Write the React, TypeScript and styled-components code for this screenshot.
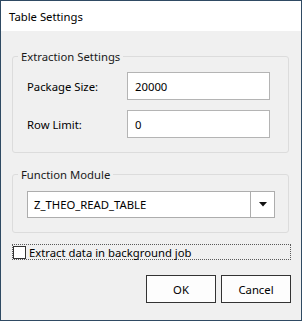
import styled, { createGlobalStyle } from 'styled-components'

const Global = createGlobalStyle`
  html, body { margin: 0; padding: 0; background: #fff; }
  * { box-sizing: border-box; }
  body { font-family: "Noto Sans", "Open Sans", sans-serif; font-size: 11.3px; color: #000; }
`

const Window = styled.div`
  width: 302px;
  height: 321px;
  border: 1px solid #2f4a63;
  background: #f0f0f0;
  display: flex;
  flex-direction: column;
`

const TitleBar = styled.div`
  height: 30px;
  background: #fff;
  display: flex;
  align-items: center;
  padding-left: 8px;
  color: #000;
`

const Body = styled.div`
  flex: 1;
  padding: 17px 12px 0 11px;
  display: flex;
  flex-direction: column;
`

const Group = styled.fieldset<{ $gap?: number }>`
  margin: 0 0 ${(p) => p.$gap ?? 0}px 0;
  padding: 7px 13px 14px 14px;
  min-width: 0;
  border: 1px solid #dcdcdc;
  border-radius: 3px;
  display: flex;
  flex-direction: column;
  gap: 10px;
`

const Legend = styled.legend`
  padding: 0 3px;
  margin-left: -9px;
  line-height: 17px;
  color: #1a1a1a;
`

const FieldRow = styled.div`
  display: flex;
  align-items: center;
  height: 28px;
`

const Label = styled.span`
  width: 100px;
`

const TextInput = styled.div`
  width: 143px;
  height: 28px;
  border: 1px solid #b4b4b4;
  background: #fff;
  display: flex;
  align-items: center;
  padding-left: 7px;
`

const Combo = styled.div`
  width: 248px;
  height: 27px;
  margin-top: 1px;
  border: 1px solid #adadad;
  background: #fff;
  display: flex;
  align-items: stretch;
`

const ComboText = styled.div`
  flex: 1;
  display: flex;
  align-items: center;
  padding-left: 6px;
`

const ComboButton = styled.div`
  width: 24px;
  border-left: 1px solid #adadad;
  display: flex;
  align-items: center;
  justify-content: center;
`

const CheckRow = styled.label`
  margin-top: 11px;
  margin-right: -2px;
  height: 16px;
  border: 1px dotted #5a5a5a;
  display: flex;
  align-items: center;
  gap: 3px;
`

const CheckBox = styled.span`
  width: 13px;
  height: 13px;
  border: 1px solid #333;
  background: #fff;
`

const ButtonBar = styled.div`
  margin-top: 15px;
  margin-right: -2px;
  display: flex;
  justify-content: flex-end;
  gap: 5px;
`

const Button = styled.div`
  width: 70px;
  height: 28px;
  border: 1px solid #333;
  background: #fdfdfd;
  display: flex;
  align-items: center;
  justify-content: center;
`

export default function App() {
  return (
    <>
      <Global />
      <Window>
        <TitleBar>Table Settings</TitleBar>
        <Body>
          <Group $gap={13}>
            <Legend>Extraction Settings</Legend>
            <FieldRow>
              <Label>Package Size:</Label>
              <TextInput>20000</TextInput>
            </FieldRow>
            <FieldRow>
              <Label>Row Limit:</Label>
              <TextInput>0</TextInput>
            </FieldRow>
          </Group>
          <Group>
            <Legend>Function Module</Legend>
            <Combo>
              <ComboText>Z_THEO_READ_TABLE</ComboText>
              <ComboButton>
                <svg width="8" height="5" viewBox="0 0 8 5">
                  <path d="M0 0 H8 L4 4.5 Z" fill="#111" />
                </svg>
              </ComboButton>
            </Combo>
          </Group>
          <CheckRow>
            <CheckBox />
            <span>Extract data in background job</span>
          </CheckRow>
          <ButtonBar>
            <Button>OK</Button>
            <Button>Cancel</Button>
          </ButtonBar>
        </Body>
      </Window>
    </>
  )
}
